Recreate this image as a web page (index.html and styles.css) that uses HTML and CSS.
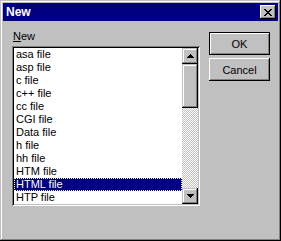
FILE: index.html
```html
<!DOCTYPE HTML>
<html>
<head>
<meta charset="UTF-8">
<title>New</title>
<link rel="stylesheet" href="styles.css">
</head>
<body>
<div class="window">
	<div class="titlebar">
		<span class="title">New</span>
		<button class="close"><svg width="8" height="7" viewBox="0 0 8 7" shape-rendering="crispEdges"><path d="M0 0h2v1h-2zM6 0h2v1h-2zM1 1h2v1h-2zM5 1h2v1h-2zM2 2h4v1h-4zM3 3h2v1h-2zM2 4h4v1h-4zM1 5h2v1h-2zM5 5h2v1h-2zM0 6h2v1h-2zM6 6h2v1h-2z" fill="#000"/></svg></button>
	</div>
	<div class="body">
		<div class="list-col">
			<div class="label"><u>N</u>ew</div>
			<div class="listbox">
				<ul class="items">
					<li>asa file</li>
					<li>asp file</li>
					<li>c file</li>
					<li>c++ file</li>
					<li>cc file</li>
					<li>CGI file</li>
					<li>Data file</li>
					<li>h file</li>
					<li>hh file</li>
					<li>HTM file</li>
					<li class="selected">HTML file</li>
					<li>HTP file</li>
				</ul>
				<div class="scrollbar">
					<div class="sb-btn"><svg width="7" height="4" viewBox="0 0 7 4" shape-rendering="crispEdges"><path d="M3 0h1v1h-1zM2 1h3v1h-3zM1 2h5v1h-5zM0 3h7v1h-7z" fill="#000"/></svg></div>
					<div class="sb-track"><div class="sb-thumb"></div></div>
					<div class="sb-btn"><svg width="7" height="4" viewBox="0 0 7 4" shape-rendering="crispEdges"><path d="M0 0h7v1h-7zM1 1h5v1h-5zM2 2h3v1h-3zM3 3h1v1h-1z" fill="#000"/></svg></div>
				</div>
			</div>
		</div>
		<div class="buttons">
			<button class="btn default">OK</button>
			<button class="btn">Cancel</button>
		</div>
	</div>
</div>
</body>
</html>
```

FILE: styles.css
```css
body {margin:0; font-family:"Liberation Sans", Arial, sans-serif; font-size:11px; color:#000;}
.window {width:281px; height:241px; box-sizing:border-box; padding:3px; background:#c0c0c0;
	box-shadow: inset -1px -1px #000, inset 1px 1px #c0c0c0, inset -2px -2px #808080, inset 2px 2px #fff;}
.titlebar {height:18px; display:flex; align-items:center; background:#000080; padding:0 2px 0 3px;}
.title {flex:1; color:#fff; font-weight:bold; font-size:12px; line-height:18px;}
.close {width:16px; height:14px; padding:0; border:0; background:#c0c0c0; display:flex; align-items:center; justify-content:center;
	box-shadow: inset -1px -1px #000, inset 1px 1px #fff, inset -2px -2px #808080;}
.body {display:flex; gap:9px; padding:9px 8px 0 9px;}
.label {height:13px; line-height:13px; padding-left:1px; margin-bottom:3px;}
.listbox {width:188px; height:160px; box-sizing:border-box; padding:2px; background:#fff; display:flex;
	box-shadow: inset 1px 1px #808080, inset -1px -1px #fff, inset 2px 2px #000, inset -2px -2px #c0c0c0;}
.items {flex:1; list-style:none; margin:0; padding:0;}
.items li {height:13px; line-height:13px; padding-left:2px; white-space:nowrap;}
.items .selected {background:#000080; color:#fff; outline:1px dotted #fff; outline-offset:-1px;}
.scrollbar {width:16px; display:flex; flex-direction:column;}
.sb-btn {height:16px; background:#c0c0c0; display:flex; align-items:center; justify-content:center;
	box-shadow: inset -1px -1px #000, inset 1px 1px #c0c0c0, inset -2px -2px #808080, inset 2px 2px #fff;}
.sb-track {flex:1; background-color:#fff; background-image:conic-gradient(#c0c0c0 25%, #fff 0 50%, #c0c0c0 0 75%, #fff 0); background-size:2px 2px;}
.sb-thumb {height:44px; background:#c0c0c0;
	box-shadow: inset -1px -1px #000, inset 1px 1px #c0c0c0, inset -2px -2px #808080, inset 2px 2px #fff;}
.buttons {display:flex; flex-direction:column; gap:3px; padding-top:2px;}
.btn {width:61px; height:23px; padding:0; border:0; background:#c0c0c0; font-family:inherit; font-size:11px; color:#000;
	box-shadow: inset -1px -1px #000, inset 1px 1px #fff, inset -2px -2px #808080;}
.btn.default {box-shadow: inset 0 0 0 1px #000, inset 1px 1px 0 1px #fff, inset -1px -1px 0 1px #808080;}
```
